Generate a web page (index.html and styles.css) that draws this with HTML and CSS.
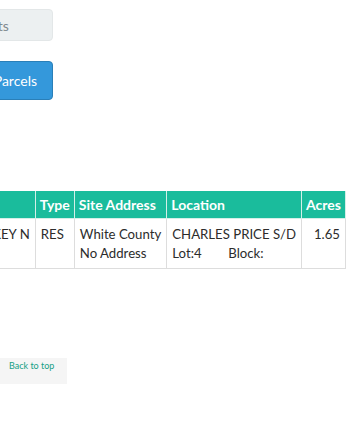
FILE: index.html
```html
<!DOCTYPE html>
<html>
<head>
<meta charset="utf-8">
<link rel="stylesheet" href="styles.css">
</head>
<body>
<div class="page">
  <form class="search">
    <div class="field">Search Results</div>
    <button type="button" class="btn">Search Parcels</button>
  </form>

  <div class="table-wrap">
    <table class="results">
      <thead>
        <tr>
          <th>Owner</th>
          <th>Type</th>
          <th>Site Address</th>
          <th>Location</th>
          <th>Acres</th>
        </tr>
      </thead>
      <tbody>
        <tr>
          <td class="owner">COOPER RICKEY N</td>
          <td>RES</td>
          <td>White County<br>No Address</td>
          <td>CHARLES PRICE S/D<br><span class="lot">Lot:4</span>Block:</td>
          <td class="num">1.65</td>
        </tr>
      </tbody>
    </table>
  </div>

  <div class="footer">
    <a class="top-link" href="#">Back to top</a>
  </div>
</div>
</body>
</html>
```

FILE: styles.css
```css
html, body {
  margin: 0;
  padding: 0;
  background: #ffffff;
}

body {
  font-family: Lato, "Open Sans", sans-serif;
  font-size: 14px;
  line-height: 20px;
  color: #333333;
  width: 346px;
  overflow: hidden;
}

.page {
  display: flex;
  flex-direction: column;
  padding-top: 9px;
}

.search {
  width: 53px;
  display: flex;
  flex-direction: column;
  align-items: flex-end;
  gap: 20px;
  margin: 0;
}

.field {
  flex: none;
  width: 146px;
  height: 32px;
  box-sizing: border-box;
  padding: 6px 12px;
  background: #ecf0f1;
  border: 1px solid #e3e7e8;
  border-radius: 4px;
  color: #7f8a8f;
  font-size: 14px;
  white-space: nowrap;
}

.btn {
  flex: none;
  height: 39px;
  box-sizing: border-box;
  padding: 0 15px 0 14px;
  background: #3498db;
  border: 1px solid #2a7fb8;
  border-radius: 4px;
  color: #ffffff;
  font-family: Lato, "Open Sans", sans-serif;
  font-size: 14px;
  white-space: nowrap;
}

.table-wrap {
  margin-top: 91px;
  width: 346px;
  display: flex;
  justify-content: flex-end;
}

.results {
  flex: none;
  border-collapse: collapse;
  white-space: nowrap;
}

.results th,
.results td {
  border: 1px solid #dddddd;
  padding: 4px 5px;
  text-align: left;
  vertical-align: top;
}

.results th {
  background: #1abc9c;
  color: #ffffff;
  font-weight: 700;
  font-size: 14px;
  padding-top: 3px;
  padding-bottom: 3px;
  padding-left: 4px;
  padding-right: 4px;
  border-color: #d4efe8;
  border-top-color: #1abc9c;
}

.results td {
  font-size: 13.2px;
  line-height: 19px;
  padding-top: 6px;
  padding-bottom: 5px;
  color: #2c2c2c;
}

.results td.num {
  text-align: right;
}

.lot {
  display: inline-block;
  width: 56px;
}

.footer {
  margin-top: 89px;
  width: 67px;
  height: 26px;
  box-sizing: border-box;
  background: #f5f5f5;
  padding: 0 0 0 9px;
  line-height: 12px;
}

.top-link {
  color: #16a085;
  font-size: 9px;
  text-decoration: none;
}
```
